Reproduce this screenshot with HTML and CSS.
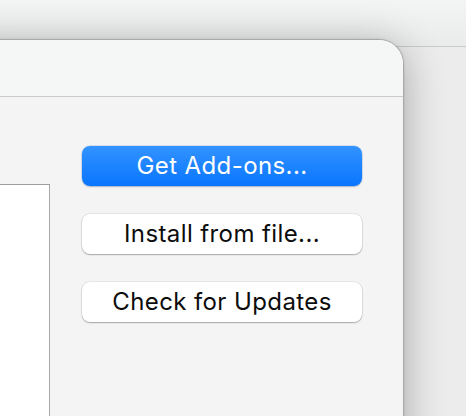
FILE: index.html
```html
<!DOCTYPE html>
<html>
<head>
<meta charset="utf-8">
<link rel="stylesheet" href="styles.css">
</head>
<body>
<div class="desk">
  <div class="back"></div>
  <div class="window">
    <div class="titlebar"></div>
    <div class="content">
      <div class="panel"></div>
      <div class="actions">
        <button class="btn primary">Get Add-ons...</button>
        <button class="btn">Install from file...</button>
        <button class="btn">Check for Updates</button>
      </div>
    </div>
  </div>
</div>
</body>
</html>
```
FILE: styles.css
```css
html, body {
  margin: 0;
  padding: 0;
  width: 466px;
  height: 416px;
  overflow: hidden;
}
.desk {
  position: relative;
  width: 466px;
  height: 416px;
  background: linear-gradient(to bottom, #f3f4f4 0px, #eaebeb 46px);
  overflow: hidden;
}
.back {
  position: absolute;
  left: 0;
  top: 46px;
  right: 0;
  bottom: 0;
  border-top: 1px solid #cbcbcb;
  background: #ececec;
}
.window {
  position: absolute;
  left: -30px;
  top: 39px;
  width: 433px;
  height: 420px;
  border: 1px solid #a9a9a9;
  border-left: none;
  border-bottom: none;
  border-top-right-radius: 25px;
  background: #f4f4f4;
  box-shadow: 0 6px 40px rgba(0,0,0,0.3), 0 0 2px rgba(0,0,0,0.15);
  overflow: hidden;
  display: flex;
  flex-direction: column;
}
.titlebar {
  height: 56px;
  flex: none;
  background: #f5f6f6;
  border-bottom: 1px solid #cacaca;
}
.content {
  flex: 1;
  display: flex;
  align-items: flex-start;
}
.panel {
  margin-top: 87px;
  width: 79px;
  height: 300px;
  flex: none;
  background: #ffffff;
  border-top: 1px solid #9d9d9d;
  border-right: 1px solid #a8a8a8;
}
.actions {
  margin-left: 32px;
  padding-top: 49px;
  display: flex;
  flex-direction: column;
  gap: 28px;
}
.btn {
  width: 280px;
  height: 40px;
  margin: 0;
  padding: 0;
  border: none;
  border-radius: 8px;
  background: #ffffff;
  color: #0c0c0c;
  font-family: "Inter", "Roboto", sans-serif;
  font-size: 24px;
  font-weight: 400;
  letter-spacing: 0.4px;
  line-height: 40px;
  box-shadow: 0 0 0 0.5px rgba(0,0,0,0.12), 0 1px 1.5px rgba(0,0,0,0.28);
}
.btn.primary {
  color: #ffffff;
  background: linear-gradient(to bottom, #3293ff, #0a76ff);
  box-shadow: 0 0 0 0.5px rgba(0,80,220,0.25), 0 1px 1.5px rgba(0,0,0,0.2);
}
```
